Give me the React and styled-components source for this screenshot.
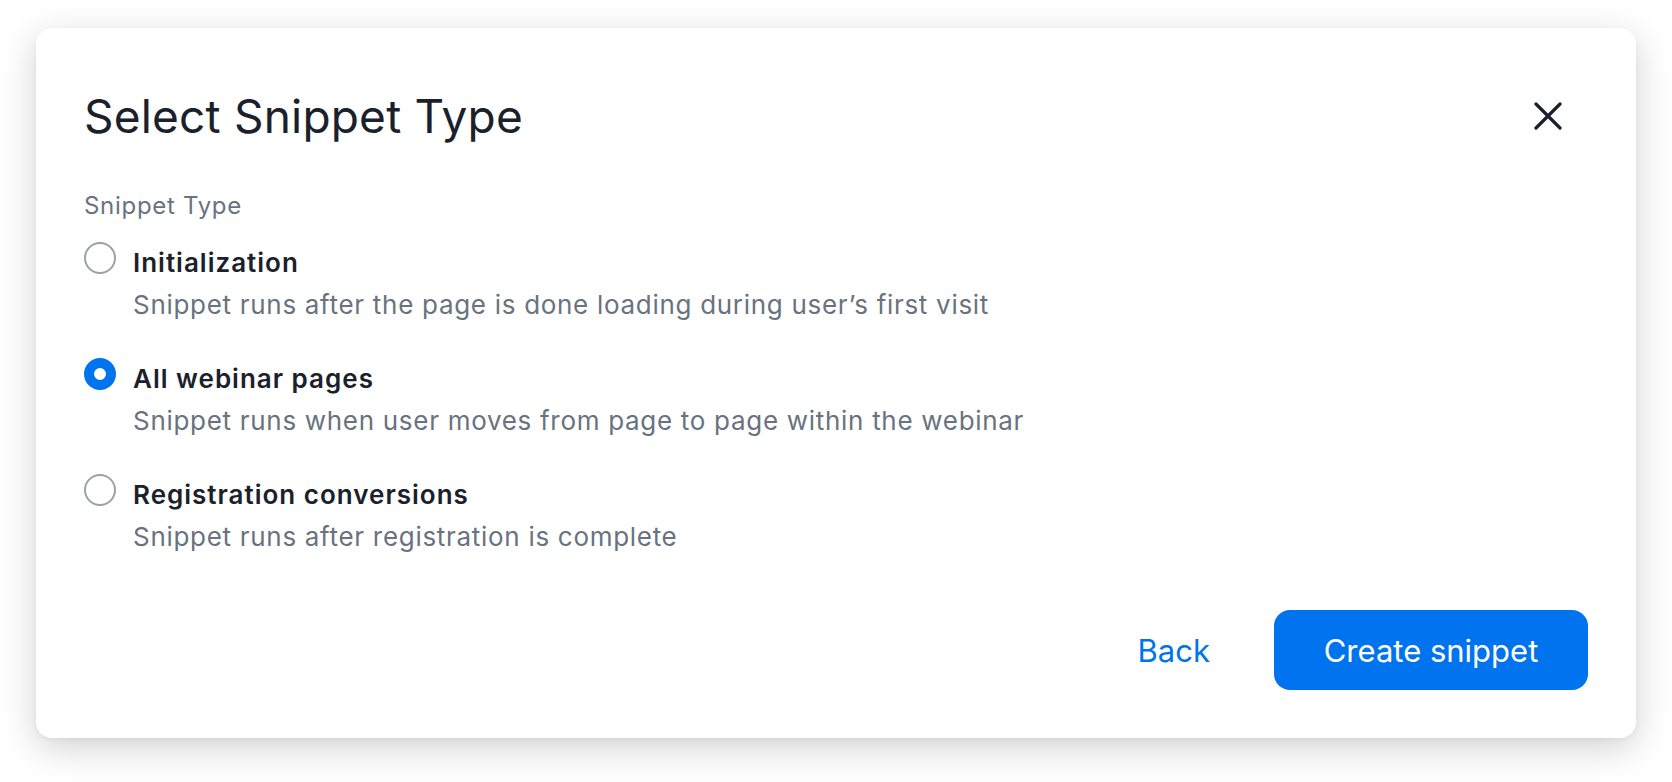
import React, { useState } from "react";
import styled, { createGlobalStyle } from "styled-components";

const Global = createGlobalStyle`
  html, body { margin: 0; padding: 0; background: #ffffff; }
  body { font-family: Inter, "Noto Sans", sans-serif; -webkit-font-smoothing: antialiased; }
  * { box-sizing: border-box; }
`;

const Page = styled.div`
  padding: 28px 36px 44px;
`;

const Modal = styled.div`
  width: 1600px;
  background: #ffffff;
  border-radius: 16px;
  box-shadow: 0 10px 36px rgba(0, 0, 0, 0.18), 0 2px 6px rgba(0, 0, 0, 0.04);
  padding: 48px;
  display: flex;
  flex-direction: column;
`;

const Header = styled.div`
  height: 80px;
  display: flex;
  align-items: center;
  justify-content: space-between;
`;

const Title = styled.h1`
  margin: 0;
  font-size: 46px;
  line-height: 56px;
  letter-spacing: 0.2px;
  font-weight: 400;
  color: #1a212b;
`;

const CloseButton = styled.button`
  border: 0;
  background: transparent;
  padding: 0;
  margin-right: 26px;
  width: 28px;
  height: 28px;
  display: flex;
  align-items: center;
  justify-content: center;
  color: #1a212b;
  cursor: pointer;
`;

const FieldLabel = styled.div`
  margin-top: 36px;
  margin-bottom: 22px;
  font-size: 24px;
  line-height: 28px;
  letter-spacing: 0.7px;
  color: #68737f;
`;

const OptionList = styled.div`
  display: flex;
  flex-direction: column;
  gap: 32px;
`;

const Option = styled.label`
  display: flex;
  align-items: flex-start;
  gap: 17px;
  cursor: pointer;
`;

const Radio = styled.span`
  flex: none;
  width: 32px;
  height: 32px;
  border-radius: 50%;
  background: #ffffff;
  border: ${(p) => (p.$checked ? "10.5px solid #0073ee" : "2px solid #9ba2ab")};
`;

const OptionText = styled.div`
  display: flex;
  flex-direction: column;
`;

const OptionTitle = styled.div`
  font-size: 26px;
  line-height: 42px;
  letter-spacing: 1px;
  font-weight: 600;
  color: #1a212b;
`;

const OptionDesc = styled.div`
  font-size: 26px;
  line-height: 42px;
  letter-spacing: 0.7px;
  font-weight: 400;
  color: #68737f;
`;

const Footer = styled.div`
  margin-top: 52px;
  display: flex;
  justify-content: flex-end;
  align-items: center;
  gap: 64px;
`;

const TextButton = styled.button`
  border: 0;
  background: transparent;
  padding: 0;
  font-family: inherit;
  font-size: 31px;
  color: #0073ee;
  cursor: pointer;
`;

const PrimaryButton = styled.button`
  border: 0;
  height: 80px;
  width: 314px;
  border-radius: 16px;
  background: #0073ee;
  color: #ffffff;
  font-family: inherit;
  font-size: 31px;
  cursor: pointer;
`;

const options = [
  {
    id: "init",
    title: "Initialization",
    desc: "Snippet runs after the page is done loading during user\u2019s first visit",
  },
  {
    id: "all",
    title: "All webinar pages",
    desc: "Snippet runs when user moves from page to page within the webinar",
  },
  {
    id: "reg",
    title: "Registration conversions",
    desc: "Snippet runs after registration is complete",
  },
];

export default function App() {
  const [selected, setSelected] = useState("all");
  return (
    <Page>
      <Global />
      <Modal>
        <Header>
          <Title>Select Snippet Type</Title>
          <CloseButton aria-label="Close">
            <svg width="28" height="28" viewBox="0 0 28 28" fill="none">
              <path d="M2 2L26 26M26 2L2 26" stroke="currentColor" strokeWidth="3.2" strokeLinecap="round" />
            </svg>
          </CloseButton>
        </Header>
        <FieldLabel>Snippet Type</FieldLabel>
        <OptionList>
          {options.map((o) => (
            <Option key={o.id} onClick={() => setSelected(o.id)}>
              <Radio $checked={selected === o.id} />
              <OptionText>
                <OptionTitle>{o.title}</OptionTitle>
                <OptionDesc>{o.desc}</OptionDesc>
              </OptionText>
            </Option>
          ))}
        </OptionList>
        <Footer>
          <TextButton>Back</TextButton>
          <PrimaryButton>Create snippet</PrimaryButton>
        </Footer>
      </Modal>
    </Page>
  );
}
